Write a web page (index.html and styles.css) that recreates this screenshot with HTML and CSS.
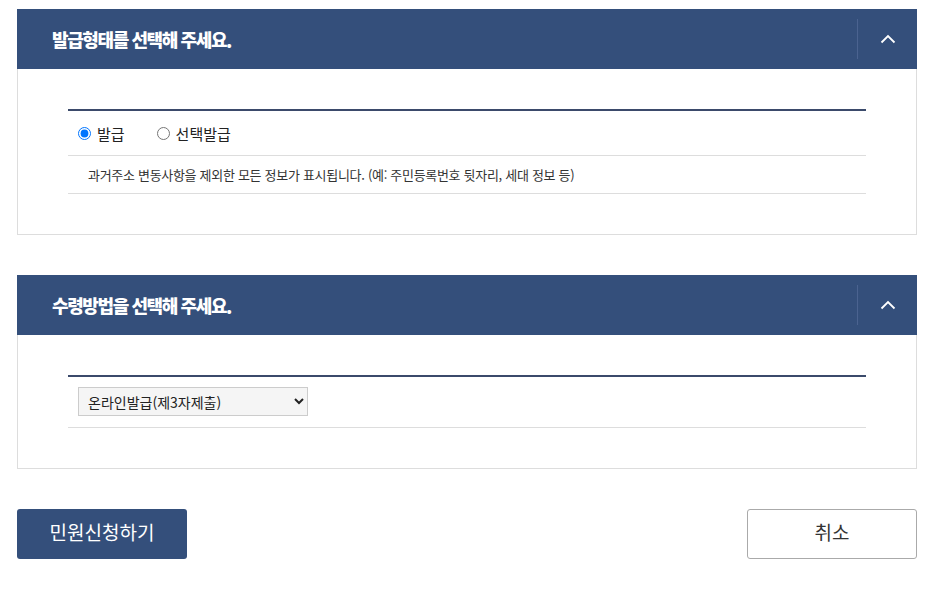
FILE: index.html
```html
<!DOCTYPE html>
<html lang="ko">
<head>
    <meta charset="UTF-8">
    <meta name="viewport" content="width=device-width, initial-scale=1.0">
    <title>민원신청</title>
    <link rel="stylesheet" href="styles.css">
</head>
<body>
    <div class="wrap">
        <div class="panel">
            <div class="panel-head">
                <h2>발급형태를 선택해 주세요.</h2>
                <button class="toggle" type="button" aria-label="접기">
                    <svg width="16" height="10" viewBox="0 0 16 10"><path d="M1.5 8.5 L8 2 L14.5 8.5" fill="none" stroke="#fff" stroke-width="1.8"/></svg>
                </button>
            </div>
            <div class="panel-body">
                <div class="form-table">
                    <div class="row radio-row">
                        <label class="radio"><input type="radio" name="type" checked> 발급</label>
                        <label class="radio"><input type="radio" name="type"> 선택발급</label>
                    </div>
                    <div class="row note-row">
                        과거주소 변동사항을 제외한 모든 정보가 표시됩니다. (예: 주민등록번호 뒷자리, 세대 정보 등)
                    </div>
                </div>
            </div>
        </div>

        <div class="panel">
            <div class="panel-head">
                <h2>수령방법을 선택해 주세요.</h2>
                <button class="toggle" type="button" aria-label="접기">
                    <svg width="16" height="10" viewBox="0 0 16 10"><path d="M1.5 8.5 L8 2 L14.5 8.5" fill="none" stroke="#fff" stroke-width="1.8"/></svg>
                </button>
            </div>
            <div class="panel-body">
                <div class="form-table">
                    <div class="row select-row">
                        <select class="receive">
                            <option>온라인발급(제3자제출)</option>
                        </select>
                    </div>
                </div>
            </div>
        </div>

        <div class="actions">
            <button class="btn primary" type="button">민원신청하기</button>
            <button class="btn cancel" type="button">취소</button>
        </div>
    </div>
</body>
</html>
```

FILE: styles.css
```css
body {
    font-family: "Noto Sans CJK KR", "Noto Sans", sans-serif;
    color: #333;
    margin: 0;
    padding: 9px 18px 0 17px;
    background-color: #fff;
}
.wrap {
    width: 900px;
}
.panel {
    margin-bottom: 40px;
}
.panel-head {
    display: flex;
    align-items: center;
    height: 60px;
    background-color: #344f7b;
    padding-left: 35px;
}
.panel-head h2 {
    flex: 1;
    margin: 0;
    color: #fff;
    font-size: 18px;
    font-weight: 900;
    letter-spacing: -1.4px;
}
.toggle {
    width: 60px;
    height: 40px;
    border: none;
    border-left: 1px solid #4b6390;
    background: none;
    padding: 0;
    display: flex;
    align-items: center;
    justify-content: center;
    cursor: pointer;
}
.panel-body {
    border: 1px solid #ddd;
    border-top: none;
    padding: 40px 50px 40px;
}
.form-table {
    border-top: 2px solid #3b4a6b;
}
.row {
    border-bottom: 1px solid #ddd;
}
.radio-row {
    display: flex;
    align-items: center;
    gap: 32px;
    height: 44px;
    padding-left: 10px;
    font-size: 15px;
    color: #222;
}
.radio {
    display: flex;
    align-items: center;
    gap: 2px;
}
.radio input {
    margin: 0 4px 0 0;
    width: 13px;
    height: 13px;
}
.note-row {
    height: 37px;
    line-height: 37px;
    padding-left: 20px;
    font-size: 13px;
    color: #333;
    letter-spacing: -0.3px;
}
.select-row {
    padding: 10px 10px 11px;
}
.receive {
    width: 230px;
    height: 29px;
    font-family: inherit;
    font-size: 14px;
    color: #222;
    background-color: #f5f5f5;
    border: 1px solid #ccc;
    padding: 0 5px;
}
.actions {
    display: flex;
    justify-content: space-between;
    margin-top: 40px;
}
.btn {
    width: 170px;
    height: 50px;
    border-radius: 3px;
    font-family: inherit;
    font-size: 19px;
    padding: 0 0 6px;
    cursor: pointer;
}
.btn.primary {
    background-color: #344f7b;
    color: #fff;
    border: none;
}
.btn.cancel {
    background-color: #fff;
    color: #333;
    border: 1px solid #aaa;
}
```
